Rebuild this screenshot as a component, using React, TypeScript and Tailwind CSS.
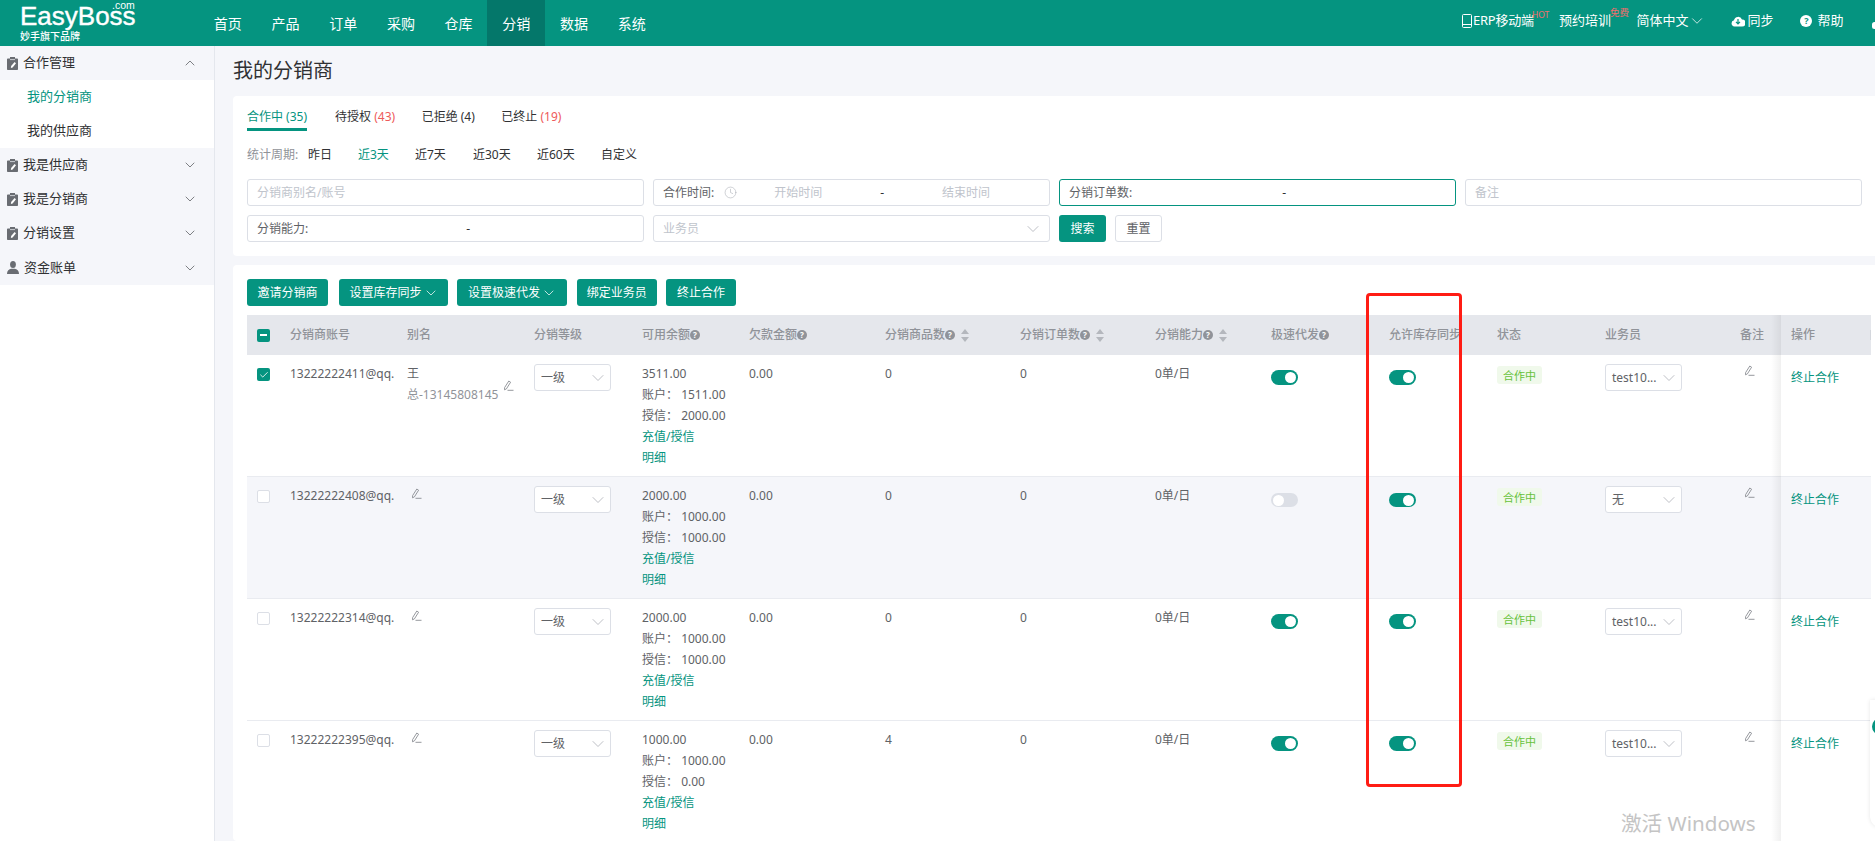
import React from "react";
import { ChevronDown, ChevronUp, Clock, Check } from "lucide-react";

const GRID =
  "grid grid-cols-[33px_117px_127px_108px_107px_136px_135px_135px_116px_118px_108px_108px_135px_51px_90px]";

function ClipIcon() {
  return (
    <svg width="11" height="13" viewBox="0 0 11 13" className="shrink-0">
      <path d="M3 0h5v1.500h2.200A.8.8 0 0 1 11 2.300v9.900a.8.8 0 0 1-.8.8H.8a.8.8 0 0 1-.8-.8V2.300a.8.8 0 0 1 .8-.8H3z" fill="#696c72" />
      <path d="M3 2.600h5" stroke="#f5f6fa" strokeWidth="0.7" />
      <path d="M7.600 5l1.400 1.200-3.400 4.200-1.700.5.2-1.800z" fill="#fff" />
    </svg>
  );
}
function UserIcon() {
  return (
    <svg width="12" height="13" viewBox="0 0 12 13" className="shrink-0">
      <ellipse cx="6" cy="3.600" rx="2.900" ry="3.500" fill="#696c72" />
      <path d="M0 13c0-3.200 2-4.800 4.200-5.200h3.600C10 8.200 12 9.800 12 13z" fill="#696c72" />
    </svg>
  );
}
function Pencil() {
  return (
    <svg width="11" height="11" viewBox="0 0 11 11" fill="none" stroke="#8a8d93" strokeWidth="0.9" className="block shrink-0">
      <path d="M5.800 1 7.600 2.200 3.400 8.900 1.500 9.800 1.600 7.600z" />
      <path d="M4.500 10.300h6" />
    </svg>
  );
}
function Help() {
  return (
    <span className="inline-flex w-[10px] h-[10px] rounded-full bg-[#909399] text-white text-[8px] leading-[10px] justify-center font-bold shrink-0">?</span>
  );
}
function Sort() {
  return (
    <svg width="8" height="13" viewBox="0 0 8 13" className="ml-[6px] shrink-0">
      <path d="M4 0 8 5H0z" fill="#b4b7bd" />
      <path d="M4 13 0 8h8z" fill="#b4b7bd" />
    </svg>
  );
}
function Toggle({ on, thin }: { on: boolean; thin?: boolean }) {
  return (
    <span className={`flex items-center w-[27px] ${thin ? "h-[14px]" : "h-[15px]"} rounded-full px-[2px] ${on ? "bg-[#059480] justify-end" : "bg-[#dcdfe6] justify-start"}`}>
      <span className="w-[11px] h-[11px] rounded-full bg-white" />
    </span>
  );
}
function Select({ text }: { text: string }) {
  return (
    <div className="flex items-center justify-between w-[77px] h-[27px] bg-white border border-[#dcdfe6] rounded-[3px] pr-[2px] pl-[6px] text-[12px] text-[#606266]">
      <span>{text}</span>
      <ChevronDown size={20} strokeWidth={0.9} color="#a8abb2" />
    </div>
  );
}
function Btn({ text, menu, cls }: { text: string; menu?: boolean; cls: string }) {
  return (
    <button className={`flex items-center h-[27px] ${menu ? "justify-start pl-[11px]" : "justify-center"} ${cls} bg-[#059480] text-white text-[12px] rounded-[3px]`}>
      {text}
      {menu && <ChevronDown size={16} strokeWidth={1.1} className="ml-[1px]" />}
    </button>
  );
}
function Field({ children, active }: { children: React.ReactNode; active?: boolean }) {
  return (
    <div className={`relative flex items-center h-[27px] px-[9px] bg-white border rounded-[3px] text-[12px] ${active ? "border-[#059480]" : "border-[#dcdfe6]"}`}>
      {children}
    </div>
  );
}
function SideHead({ text, user, open }: { text: string; user?: boolean; open?: boolean }) {
  return (
    <div className={`flex items-center ${user ? "h-[35px]" : "h-[34px]"} pl-[7px] pr-[16px] text-[13px] text-[#303133]`}>
      {user ? <UserIcon /> : <ClipIcon />}
      <span className="ml-[5px] flex-1">{text}</span>
      {open ? <ChevronUp size={16} strokeWidth={1.2} color="#606266" /> : <ChevronDown size={16} strokeWidth={1.2} color="#606266" />}
    </div>
  );
}
function HeadCell({ text, help, sort }: { text: string; help?: boolean; sort?: boolean }) {
  return (
    <div className="flex items-center pl-[10px] text-[12px] font-medium text-[#909399] whitespace-nowrap overflow-hidden">
      {text}
      {help && <Help />}
      {sort && <Sort />}
    </div>
  );
}

type RowData = {
  acc: string;
  checked?: boolean;
  wang?: boolean;
  total: string;
  zh: string;
  sx: string;
  goods: string;
  speed: boolean;
  sales: string;
  bg: string;
  thin?: boolean;
};

const rows: RowData[] = [
  { acc: "13222222411@qq.", checked: true, wang: true, total: "3511.00", zh: "1511.00", sx: "2000.00", goods: "0", speed: true, sales: "test10...", bg: "bg-white" },
  { acc: "13222222408@qq.", total: "2000.00", zh: "1000.00", sx: "1000.00", goods: "0", speed: false, sales: "无", bg: "bg-[#f5f6fa]", thin: true },
  { acc: "13222222314@qq.", total: "2000.00", zh: "1000.00", sx: "1000.00", goods: "0", speed: true, sales: "test10...", bg: "bg-white" },
  { acc: "13222222395@qq.", total: "1000.00", zh: "1000.00", sx: "0.00", goods: "4", speed: true, sales: "test10...", bg: "bg-white" },
];

function Row({ r }: { r: RowData }) {
  return (
    <div className={`${GRID} h-[122px] border-b border-[#e9ebf0] text-[12px] leading-[21px] text-[#606266] ${r.bg}`}>
      <div className="pl-[10px] pt-[13px]">
        {r.checked ? (
          <span className="flex items-center justify-center w-[13px] h-[13px] rounded-[2px] bg-[#059480]">
            <Check size={10} color="#fff" strokeWidth={2} />
          </span>
        ) : (
          <span className="block w-[13px] h-[13px] rounded-[2px] bg-white border border-[#dcdfe6]" />
        )}
      </div>
      <div className="pl-[10px] pt-[8px] overflow-hidden whitespace-nowrap">{r.acc}</div>
      <div className="pl-[10px] pt-[8px]">
        {r.wang ? (
          <div className="relative">
            <div>王</div>
            <div className="text-[#909399]">总-13145808145</div>
            <span className="absolute left-[96px] top-[17px]"><Pencil /></span>
          </div>
        ) : (
          <span className="block pl-[4px] pt-[3px]"><Pencil /></span>
        )}
      </div>
      <div className="pl-[10px] pt-[9px]"><Select text="一级" /></div>
      <div className="pl-[10px] pt-[8px] whitespace-nowrap">
        <div>{r.total}</div>
        <div>账户：&nbsp;{r.zh}</div>
        <div>授信：&nbsp;{r.sx}</div>
        <div className="text-[#059480]">充值/授信</div>
        <div className="text-[#059480]">明细</div>
      </div>
      <div className="pl-[10px] pt-[8px]">0.00</div>
      <div className="pl-[10px] pt-[8px]">{r.goods}</div>
      <div className="pl-[10px] pt-[8px]">0</div>
      <div className="pl-[10px] pt-[8px]">0单/日</div>
      <div className={`pl-[10px] ${r.thin ? "pt-[16px]" : "pt-[15px]"}`}><Toggle on={r.speed} thin={r.thin} /></div>
      <div className={`pl-[10px] ${r.thin ? "pt-[16px]" : "pt-[15px]"}`}><Toggle on thin={r.thin} /></div>
      <div className="pl-[10px] pt-[11px]">
        <span className="flex items-center justify-center w-[45px] h-[18px] rounded-[3px] bg-[#f0f9eb] text-[#67c23a] text-[11px]">合作中</span>
      </div>
      <div className="pl-[10px] pt-[9px]"><Select text={r.sales} /></div>
      <div className="pl-[14px] pt-[10px]"><Pencil /></div>
      <div className="pl-[10px] pt-[12px] text-[#059480]">终止合作</div>
    </div>
  );
}

export default function App() {
  return (
    <div className="relative w-[1875px] h-[841px] overflow-hidden bg-[#f5f6fa] font-['Noto_Sans','Noto_Sans_CJK_SC',sans-serif]">
      {/* Top bar */}
      <header className="flex items-stretch h-[46px] bg-[#059480] text-white">
        <div className="relative w-[199px] shrink-0">
          <span className="absolute left-[20px] top-[0px] font-['Liberation_Sans',sans-serif] text-[26px] leading-[32px] [-webkit-text-stroke:0.4px_#fff]">EasyBoss</span>
          <span className="absolute left-[112px] top-[0px] font-['Liberation_Sans',sans-serif] text-[10.5px] leading-[11px]">.com</span>
          <span className="absolute left-[20px] top-[30px] text-[10px] leading-[12px] font-medium">妙手旗下品牌</span>
        </div>
        <nav className="flex text-[14px]">
          {["首页", "产品", "订单", "采购", "仓库", "分销", "数据", "系统"].map((t) => (
            <span key={t} className={`flex items-center justify-center w-[57.7px] ${t === "分销" ? "bg-[#04776a]" : ""}`}>{t}</span>
          ))}
        </nav>
        <div className="relative flex-1">
          <div className="absolute left-[801.4px] top-0 h-[46px] flex items-center pb-[4px] text-[13px] whitespace-nowrap">
            <svg width="10" height="14" viewBox="0 0 10 14" fill="none" stroke="#fff" strokeWidth="1" className="mr-[1px]">
              <rect x="0.5" y="0.5" width="9" height="13" rx="1" />
              <path d="M.5 10.500h9" />
            </svg>
            <span className="tracking-[-0.2px]">ERP移动端</span>
            <span className="absolute left-[70px] top-[11px] text-[8.5px] leading-[8px] text-[#f56c6c]">HOT</span>
            <span className="ml-[25px]">预约培训</span>
            <span className="absolute left-[148px] top-[8px] text-[9.5px] leading-[10px] text-[#f56c6c]">免费</span>
            <span className="ml-[25.5px]">简体中文</span>
            <ChevronDown size={18} strokeWidth={1} />
            <svg width="14" height="13" viewBox="0 0 14 13" className="ml-[24.5px]">
              <path d="M3.500 11.500A3.200 3.200 0 0 1 3 5.200 4.200 4.200 0 0 1 11 4.500a3.500 3.500 0 0 1 0 7z" fill="#fff" />
              <path d="M7 4v4.500M5 6.800l2 2 2-2" stroke="#059480" strokeWidth="1.200" fill="none" />
            </svg>
            <span className="ml-[2.5px]">同步</span>
            <span className="ml-[27px] flex items-center justify-center w-[12px] h-[12px] rounded-full bg-white text-[#059480] text-[9px] leading-[12px] font-bold">?</span>
            <span className="ml-[5px]">帮助</span>
          </div>
          <span className="absolute right-[-2px] top-[22px] w-[5px] h-[7px] rounded-full bg-white" />
        </div>
      </header>

      <div className="flex h-[795px]">
        {/* Sidebar */}
        <aside className="w-[215px] shrink-0 bg-white border-r border-[#e4e7ed]">
          <div className="bg-[#f5f6fa]">
            <SideHead text="合作管理" open />
            <div className="bg-white text-[13px]">
              <div className="flex items-center h-[34px] pl-[27px] text-[#059480]">我的分销商</div>
              <div className="flex items-center h-[34px] pl-[27px] text-[#303133]">我的供应商</div>
            </div>
            <SideHead text="我是供应商" />
            <SideHead text="我是分销商" />
            <SideHead text="分销设置" />
            <SideHead text="资金账单" user />
          </div>
        </aside>

        {/* Main */}
        <main className="flex-1 min-w-0 pl-[18px]">
          <h1 className="h-[50px] flex items-center text-[20px] text-[#303133] font-normal">我的分销商</h1>

          <section className="h-[160px] bg-white rounded-l-[4px] pl-[14px] pr-[13px] pt-[11px]">
            <div className="flex text-[12px] text-[#303133] h-[24px] leading-[20px]">
              <span className="h-[24px] border-b-[3px] border-[#059480] text-[#059480]">合作中 (35)</span>
              <span className="ml-[28px]">待授权 <span className="text-[#ee5a5a]">(43)</span></span>
              <span className="ml-[26.5px]">已拒绝 (4)</span>
              <span className="ml-[26.5px]">已终止 <span className="text-[#ee5a5a]">(19)</span></span>
            </div>
            <div className="flex items-center h-[20px] mt-[14px] text-[12px] text-[#303133]">
              <span className="text-[#909399] w-[61px]">统计周期:</span>
              <span className="w-[50px]">昨日</span>
              <span className="w-[57px] text-[#059480]">近3天</span>
              <span className="w-[58px]">近7天</span>
              <span className="w-[64px]">近30天</span>
              <span className="w-[64px]">近60天</span>
              <span>自定义</span>
            </div>
            <div className="grid grid-cols-4 gap-[9px] mt-[14px]">
              <Field><span className="text-[#c0c4cc]">分销商别名/账号</span></Field>
              <Field>
                <span className="text-[#606266]">合作时间:</span>
                <Clock size={13} strokeWidth={1} color="#a8abb2" className="ml-[10px]" />
                <span className="text-[#c0c4cc] ml-[37px]">开始时间</span>
                <span className="text-[#303133] ml-[58px]">-</span>
                <span className="text-[#c0c4cc] ml-[58px]">结束时间</span>
              </Field>
              <Field active>
                <span className="text-[#606266]">分销订单数:</span>
                <span className="text-[#303133] ml-[150px]">-</span>
              </Field>
              <Field><span className="text-[#c0c4cc]">备注</span></Field>
              <Field>
                <span className="text-[#606266]">分销能力:</span>
                <span className="text-[#303133] ml-[158px]">-</span>
              </Field>
              <Field>
                <span className="text-[#c0c4cc] flex-1">业务员</span>
                <ChevronDown size={20} strokeWidth={0.9} color="#a8abb2" className="mr-[-3px]" />
              </Field>
              <div className="flex gap-[9px] text-[12px]">
                <button className="w-[47px] h-[27px] rounded-[3px] bg-[#059480] text-white">搜索</button>
                <button className="w-[47px] h-[27px] rounded-[3px] bg-white border border-[#dcdfe6] text-[#606266]">重置</button>
              </div>
            </div>
          </section>

          <section className="mt-[9px] h-[576px] bg-white rounded-l-[4px] pl-[14px] pt-[14px]">
            <div className="flex">
              <Btn text="邀请分销商" cls="w-[81px]" />
              <Btn text="设置库存同步" menu cls="w-[109px] ml-[10.5px]" />
              <Btn text="设置极速代发" menu cls="w-[110px] ml-[9.5px]" />
              <Btn text="绑定业务员" cls="w-[80.5px] ml-[9.5px]" />
              <Btn text="终止合作" cls="w-[70px] ml-[9px]" />
            </div>
            <div className="relative mt-[9px] w-[1624px]">
              <div className={`${GRID} h-[40px] bg-[#e5e7ec]`}>
                <div className="flex items-center pl-[10px]">
                  <span className="flex items-center justify-center w-[13px] h-[13px] rounded-[2px] bg-[#059480]">
                    <span className="w-[7px] h-[1.5px] bg-white" />
                  </span>
                </div>
                <HeadCell text="分销商账号" />
                <HeadCell text="别名" />
                <HeadCell text="分销等级" />
                <HeadCell text="可用余额" help />
                <HeadCell text="欠款金额" help />
                <HeadCell text="分销商品数" help sort />
                <HeadCell text="分销订单数" help sort />
                <HeadCell text="分销能力" help sort />
                <HeadCell text="极速代发" help />
                <HeadCell text="允许库存同步" />
                <HeadCell text="状态" />
                <HeadCell text="业务员" />
                <HeadCell text="备注" />
                <div className="flex items-center justify-between pl-[10px] text-[12px] font-medium text-[#909399]">
                  操作
                  <span className="w-[1px] h-[10px] bg-[#d4d7dd]" />
                </div>
              </div>
              {rows.map((r) => <Row key={r.acc} r={r} />)}
              {/* fixed-column shadow */}
              <div className="absolute left-[1524px] top-0 bottom-0 w-[10px] bg-gradient-to-r from-[rgba(0,0,0,0)] to-[rgba(0,0,0,0.06)] pointer-events-none" />
            </div>
          </section>
        </main>
      </div>

      {/* Annotation + overlays */}
      <div className="absolute left-[1366px] top-[293px] w-[96px] h-[494px] border-[3px] border-[#ff1c14] rounded-[4px]" />
      <div className="absolute left-[1621px] top-[809px] text-[20.6px] leading-[28px] text-[#c4c4c4] whitespace-nowrap">激活 Windows</div>
      <div className="absolute left-[1870px] top-[700px] w-[20px] h-[128px] bg-white rounded-bl-[12px] shadow-[0_0_4px_rgba(0,0,0,0.1)]" />
      <div className="absolute left-[1872px] top-[718px] w-[18px] h-[17px] rounded-full bg-[#059480]" />
    </div>
  );
}
